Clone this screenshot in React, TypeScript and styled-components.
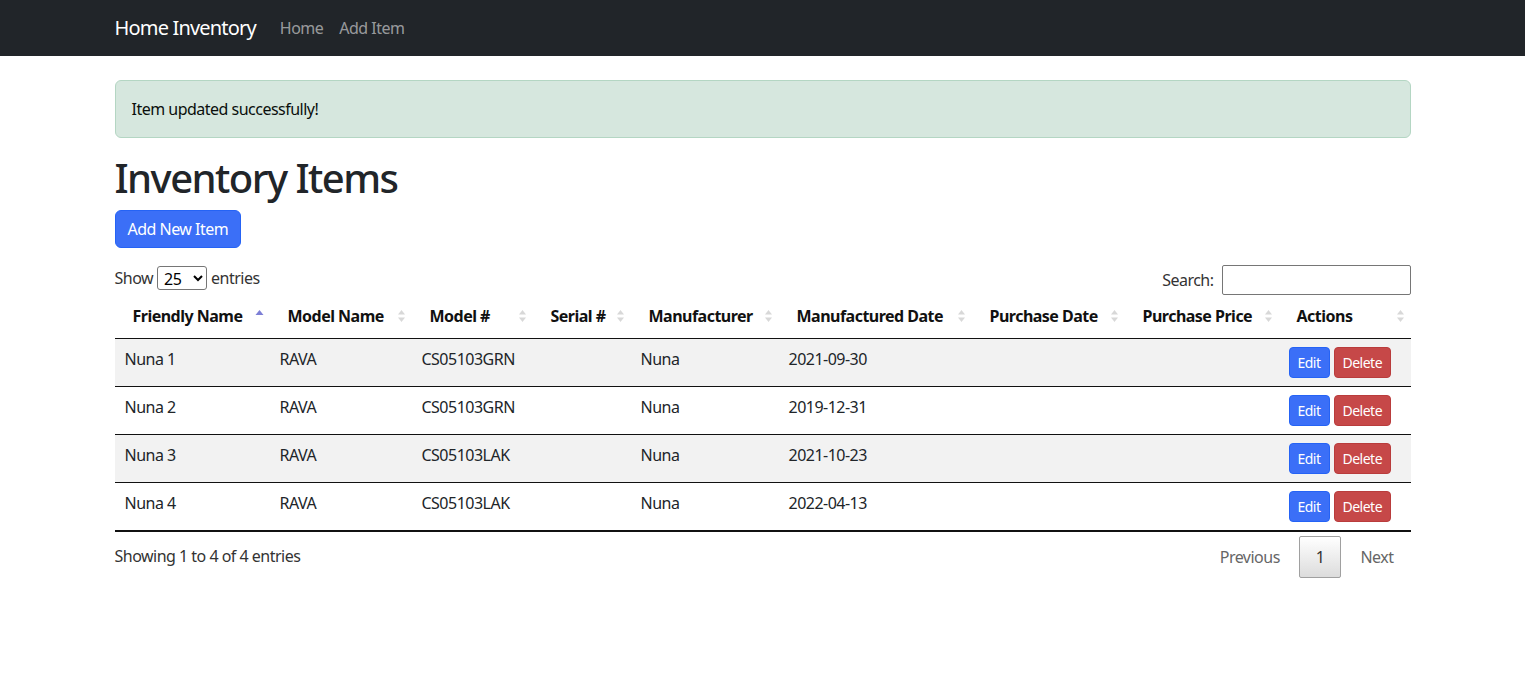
import React from "react";
import styled, { createGlobalStyle } from "styled-components";

const GlobalStyle = createGlobalStyle`
  * { box-sizing: border-box; }
  body {
    margin: 0;
    font-family: "Noto Sans", "Open Sans", sans-serif;
    font-size: 16px;
    line-height: 1.5;
    letter-spacing: -0.032em;
    color: #212529;
    background: #fff;
  }
  button, input, select { letter-spacing: inherit; }
`;

const Container = styled.div`
  width: 1320px;
  margin: 0 auto;
  padding: 0 12px;
`;

const NavBar = styled.nav`
  background: #212529;
  height: 56px;
`;

const NavInner = styled(Container)`
  display: flex;
  align-items: center;
  height: 100%;
`;

const Brand = styled.a`
  font-size: 20px;
  line-height: 30px;
  letter-spacing: -0.041em;
  color: #fff;
  margin-right: 16px;
  text-decoration: none;
`;

const NavLink = styled.a`
  color: rgba(255, 255, 255, 0.55);
  padding: 8px;
  font-size: 16px;
  text-decoration: none;
`;

const Main = styled(Container)`
  padding-top: 24px;
`;

const Alert = styled.div`
  background: #d6e7de;
  border: 1px solid #b4d6c3;
  border-radius: 6px;
  padding: 16px;
  margin-bottom: 16px;
  color: #0a0f0c;
`;

const Title = styled.h1`
  font-size: 40px;
  font-weight: 500;
  line-height: 1.2;
  letter-spacing: -0.039em;
  margin: 0 0 8px;
`;

const Button = styled.button<{ $variant?: "primary" | "danger"; $small?: boolean }>`
  font-family: inherit;
  border-radius: ${(p) => (p.$small ? "4px" : "6px")};
  border: 1px solid ${(p) => (p.$variant === "danger" ? "#b93c3c" : "#2563f5")};
  background: ${(p) => (p.$variant === "danger" ? "#c64848" : "#3b6ff7")};
  color: #fff;
  font-size: ${(p) => (p.$small ? "14px" : "16px")};
  line-height: 1.5;
  padding: ${(p) => (p.$small ? "4px 8px" : "6px 12px")};
  cursor: pointer;
`;

const AddButton = styled(Button)`
  margin-bottom: 16px;
`;

const TopBar = styled.div`
  display: flex;
  justify-content: space-between;
  align-items: center;
  height: 31px;
  margin-bottom: -1px;
`;

const Label = styled.label<{ $raise?: boolean }>`
  display: flex;
  align-items: center;
  gap: 4px;
  color: #333;
  margin-top: ${(p) => (p.$raise ? "-4px" : "0")};
`;

const Select = styled.select`
  font-family: inherit;
  font-size: 16px;
  width: 50px;
  height: 24px;
  padding: 0 2px;
  border: 1px solid #767676;
  border-radius: 3px;
  background: #fff;
`;

const SearchInput = styled.input`
  width: 189px;
  height: 30px;
  border: 1px solid #767676;
  border-radius: 2px;
  margin-left: 4px;
`;

const Table = styled.table`
  width: 100%;
  table-layout: fixed;
  border-collapse: collapse;
  border-bottom: 2px solid #111;
`;

const Th = styled.th`
  text-align: left;
  font-weight: 700;
  padding: 10px 6px 10px 18px;
  border-bottom: 1px solid #111;
  line-height: 24px;
  color: #111;
`;

const ThInner = styled.div`
  display: flex;
  justify-content: space-between;
  align-items: center;
  white-space: nowrap;
`;

const Row = styled.tr<{ $striped: boolean }>`
  background: ${(p) => (p.$striped ? "#f2f2f2" : "#fff")};
  &:not(:first-child) > td {
    border-top: 1px solid #111;
  }
`;

const Td = styled.td`
  padding: 8px 10px;
  line-height: 24px;
  vertical-align: top;
  color: #212529;
`;

const Actions = styled.div`
  display: flex;
  gap: 4px;
`;

const Footer = styled.div`
  display: flex;
  justify-content: space-between;
  align-items: flex-start;
`;

const Info = styled.div`
  padding-top: 12px;
  color: #333;
`;

const Paginate = styled.div`
  display: flex;
  padding-top: 4px;
  gap: 2px;
`;

const PageButton = styled.span<{ $current?: boolean }>`
  display: inline-block;
  padding: 8px 16px;
  line-height: 24px;
  border: 1px solid ${(p) => (p.$current ? "#a0a0a0" : "transparent")};
  border-radius: 2px;
  color: ${(p) => (p.$current ? "#333" : "#666")};
  background: ${(p) => (p.$current ? "linear-gradient(to bottom, #fff 0%, #dcdcdc 100%)" : "transparent")};
  min-width: 42px;
  text-align: center;
`;

const SortIcon = ({ active }: { active?: boolean }) =>
  active ? (
    <svg width="9" height="14" viewBox="0 0 9 14">
      <polygon points="0.5,6 4.5,1 8.5,6" fill="#7d7fd6" />
    </svg>
  ) : (
    <svg width="9" height="14" viewBox="0 0 9 14">
      <polygon points="1,5.5 4.5,1 8,5.5" fill="#d8d8d8" />
      <polygon points="1,8.5 4.5,13 8,8.5" fill="#d8d8d8" />
    </svg>
  );

const columns = [
  { label: "Friendly Name", width: 155, active: true },
  { label: "Model Name", width: 142 },
  { label: "Model #", width: 121 },
  { label: "Serial #", width: 98 },
  { label: "Manufacturer", width: 148 },
  { label: "Manufactured Date", width: 193 },
  { label: "Purchase Date", width: 153 },
  { label: "Purchase Price", width: 154 },
  { label: "Actions", width: 132 },
];

const rows = [
  ["Nuna 1", "RAVA", "CS05103GRN", "", "Nuna", "2021-09-30", "", ""],
  ["Nuna 2", "RAVA", "CS05103GRN", "", "Nuna", "2019-12-31", "", ""],
  ["Nuna 3", "RAVA", "CS05103LAK", "", "Nuna", "2021-10-23", "", ""],
  ["Nuna 4", "RAVA", "CS05103LAK", "", "Nuna", "2022-04-13", "", ""],
];

export default function App() {
  return (
    <>
      <GlobalStyle />
      <NavBar>
        <NavInner>
          <Brand href="#">Home Inventory</Brand>
          <NavLink href="#">Home</NavLink>
          <NavLink href="#">Add Item</NavLink>
        </NavInner>
      </NavBar>
      <Main>
        <Alert>Item updated successfully!</Alert>
        <Title>Inventory Items</Title>
        <AddButton $variant="primary">Add New Item</AddButton>
        <TopBar>
          <Label $raise>
            Show
            <Select defaultValue="25">
              <option value="10">10</option>
              <option value="25">25</option>
              <option value="50">50</option>
              <option value="100">100</option>
            </Select>
            entries
          </Label>
          <Label>
            Search:
            <SearchInput type="search" />
          </Label>
        </TopBar>
        <Table>
          <colgroup>
            {columns.map((c) => (
              <col key={c.label} style={{ width: c.width }} />
            ))}
          </colgroup>
          <thead>
            <tr>
              {columns.map((c) => (
                <Th key={c.label}>
                  <ThInner>
                    <span>{c.label}</span>
                    <SortIcon active={c.active} />
                  </ThInner>
                </Th>
              ))}
            </tr>
          </thead>
          <tbody>
            {rows.map((r, i) => (
              <Row key={i} $striped={i % 2 === 0}>
                {r.map((v, j) => (
                  <Td key={j}>{v}</Td>
                ))}
                <Td>
                  <Actions>
                    <Button $small $variant="primary">Edit</Button>
                    <Button $small $variant="danger">Delete</Button>
                  </Actions>
                </Td>
              </Row>
            ))}
          </tbody>
        </Table>
        <Footer>
          <Info>Showing 1 to 4 of 4 entries</Info>
          <Paginate>
            <PageButton>Previous</PageButton>
            <PageButton $current>1</PageButton>
            <PageButton>Next</PageButton>
          </Paginate>
        </Footer>
      </Main>
    </>
  );
}
